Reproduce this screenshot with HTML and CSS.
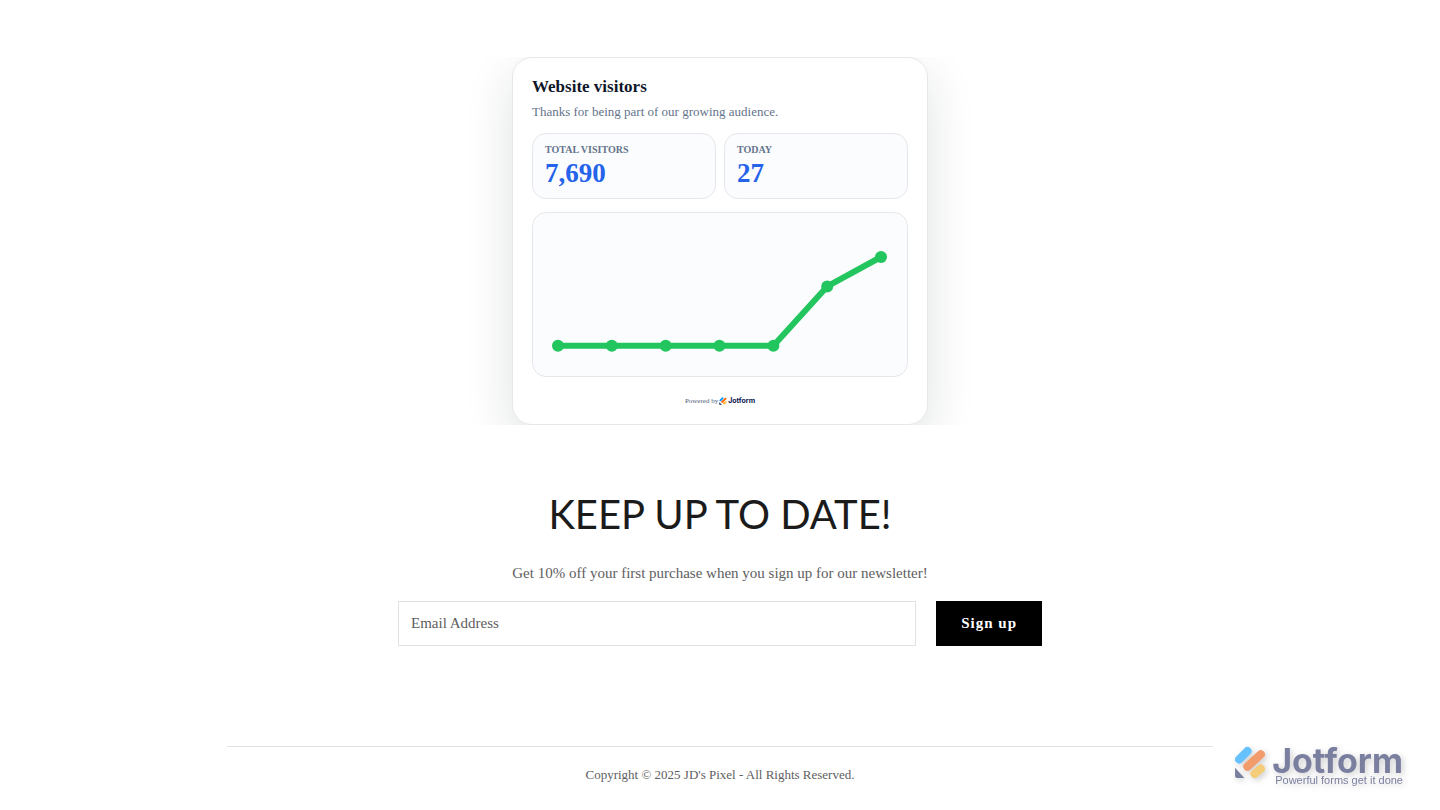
FILE: index.html
```html
<!DOCTYPE html>
<html lang="en">
<head>
    <meta charset="UTF-8">
    <meta name="viewport" content="width=device-width, initial-scale=1.0">
    <title>JD's Pixel</title>
    <link rel="stylesheet" href="styles.css">
</head>
<body>

<main>
    <section class="visitors">
        <div class="card">
            <h2>Website visitors</h2>
            <p class="card-text">Thanks for being part of our growing audience.</p>
            <div class="stats">
                <div class="stat">
                    <span class="stat-label">TOTAL VISITORS</span>
                    <span class="stat-value">7,690</span>
                </div>
                <div class="stat">
                    <span class="stat-label">TODAY</span>
                    <span class="stat-value">27</span>
                </div>
            </div>
            <div class="chart">
                <svg viewBox="0 0 374 163" role="img" aria-label="Visitors chart">
                    <polyline points="25,132.8 78.8,132.8 132.7,132.8 186.5,132.8 240.4,132.8 294.2,73.4 348,44" fill="none" stroke="#22c55e" stroke-width="6" stroke-linejoin="round"/>
                    <g fill="#22c55e">
                        <circle cx="25" cy="132.8" r="6"/>
                        <circle cx="78.8" cy="132.8" r="6"/>
                        <circle cx="132.7" cy="132.8" r="6"/>
                        <circle cx="186.5" cy="132.8" r="6"/>
                        <circle cx="240.4" cy="132.8" r="6"/>
                        <circle cx="294.2" cy="73.4" r="6"/>
                        <circle cx="348" cy="44" r="6"/>
                    </g>
                </svg>
            </div>
            <a class="powered" href="#">
                <span>Powered by</span>
                <svg class="powered-icon" viewBox="0 0 32 34" aria-hidden="true">
                    <g fill="none" stroke-width="8" stroke-linecap="round">
                        <path d="M5 14 14 5" stroke="#0099ff"/>
                        <path d="M12 21 27 7" stroke="#ff6100"/>
                        <path d="M20 28 27 22" stroke="#ffb629"/>
                    </g>
                    <path d="M0 22v9q0 2 2 2h9z" fill="#0a1551"/>
                </svg>
                <span class="powered-name">Jotform</span>
            </a>
        </div>
    </section>

    <section class="newsletter">
        <h1>KEEP UP TO DATE!</h1>
        <p>Get 10% off your first purchase when you sign up for our newsletter!</p>
        <form class="signup">
            <input type="email" name="email" placeholder="Email Address" aria-label="Email Address">
            <button type="submit">Sign up</button>
        </form>
    </section>
</main>

<footer>
    <p>Copyright © 2025 JD's Pixel - All Rights Reserved.</p>
</footer>

<!-- Jotform badge, stays in the corner -->
<a class="badge" href="#">
    <svg class="badge-icon" viewBox="0 0 34 34" aria-hidden="true">
        <g fill="none" stroke-width="8" stroke-linecap="round">
            <path d="M6 15 14 7" stroke="#66c2ff"/>
            <path d="M14 22 27 10" stroke="#f39c6b"/>
            <path d="M21 29 27 24" stroke="#f5cc78"/>
        </g>
        <path d="M2 23v8q0 2 2 2h7z" fill="#7a7f9f"/>
    </svg>
    <span class="badge-text">
        <span class="badge-name">Jotform</span>
        <span class="badge-slogan">Powerful forms get it done</span>
    </span>
</a>

</body>
</html>
```
FILE: styles.css
```css
body {
    margin: 0;
    background-color: #fff;
    color: #5e5e5e;
    font-family: "Liberation Serif", serif;
}
main, footer {
    max-width: 986px;
    margin: 0 auto;
}
h1, h2, p {
    margin: 0;
    font-weight: normal;
}

/* Visitors widget, the shadow is cut off at the top and bottom */
.visitors {
    margin-top: 57px;
    overflow: hidden;
}
.card {
    max-width: 416px;
    margin: 0 auto;
    padding: 19px;
    box-sizing: border-box;
    border: 1px solid #e5e7eb;
    border-radius: 20px;
    background-color: #fff;
    box-shadow: 0 16px 48px rgba(15, 30, 30, 0.13);
}
.card h2 {
    color: #0f172a;
    font-size: 17px;
    line-height: 20px;
    font-weight: bold;
}
.card-text {
    margin-top: 7px;
    color: #64748b;
    font-size: 13px;
    line-height: 16px;
}
.stats {
    display: flex;
    gap: 8px;
    margin-top: 13px;
}
.stat {
    flex: 1;
    display: flex;
    flex-direction: column;
    padding: 10px 12px 8px;
    border: 1px solid #e5e7eb;
    border-radius: 14px;
    background-color: #fbfcfe;
}
.stat-label {
    color: #64748b;
    font-size: 10px;
    line-height: 12px;
    font-weight: bold;
}
.stat-value {
    color: #2563eb;
    font-size: 27px;
    line-height: 34px;
    font-weight: bold;
}
.chart {
    margin-top: 13px;
    border: 1px solid #e5e7eb;
    border-radius: 14px;
    background-color: #fbfcfe;
}
.chart svg {
    display: block;
    width: 100%;
}
.powered {
    display: flex;
    justify-content: center;
    align-items: center;
    gap: 1px;
    margin-top: 20px;
    color: #4b5a70;
    font-size: 7px;
    line-height: 8px;
    text-decoration: none;
}
.powered-icon {
    width: 8px;
    height: 8px;
}
.powered-name {
    color: #0a1551;
    font-family: Inter, sans-serif;
    font-weight: bold;
}

.newsletter {
    padding: 64px 24px 100px;
    text-align: center;
}
.newsletter h1 {
    color: #1b1b1b;
    font-family: Lato, sans-serif;
    font-size: 40px;
    line-height: 50px;
}
.newsletter p {
    margin-top: 22px;
    font-size: 15px;
    line-height: 24px;
}
.signup {
    display: flex;
    gap: 20px;
    max-width: 644px;
    margin: 16px auto 0;
}
.signup input {
    flex: 1;
    min-width: 0;
    padding: 10px 12px;
    border: 1px solid #e2e2e2;
    background-color: #fff;
    color: #5e5e5e;
    font-family: inherit;
    font-size: 15px;
    line-height: 23px;
}
.signup input::placeholder {
    color: #5e5e5e;
}
.signup button {
    padding: 11px 25px;
    border: none;
    background-color: #000;
    color: #fff;
    font-family: inherit;
    font-size: 15px;
    line-height: 23px;
    font-weight: bold;
    letter-spacing: 1px;
    cursor: pointer;
}

footer {
    padding: 18px 0 24px;
    border-top: 1px solid #e2e2e2;
    box-sizing: border-box;
    text-align: center;
}
footer p {
    font-size: 13px;
    line-height: 20px;
}

.badge {
    position: fixed;
    right: 37px;
    bottom: 24px;
    display: flex;
    align-items: flex-start;
    gap: 4px;
    color: #7a7f9f;
    text-decoration: none;
    filter: drop-shadow(2px 2px 3px rgba(0, 0, 0, 0.2));
}
.badge-icon {
    width: 35px;
    height: 35px;
}
.badge-text {
    display: flex;
    flex-direction: column;
    align-items: flex-end;
}
.badge-name {
    font-family: Inter, sans-serif;
    font-size: 34px;
    line-height: 34px;
    font-weight: bold;
}
/* tucked up under the name */
.badge-slogan {
    margin-top: -4px;
    font-family: "Liberation Sans", sans-serif;
    font-size: 11px;
    line-height: 12px;
}
```
